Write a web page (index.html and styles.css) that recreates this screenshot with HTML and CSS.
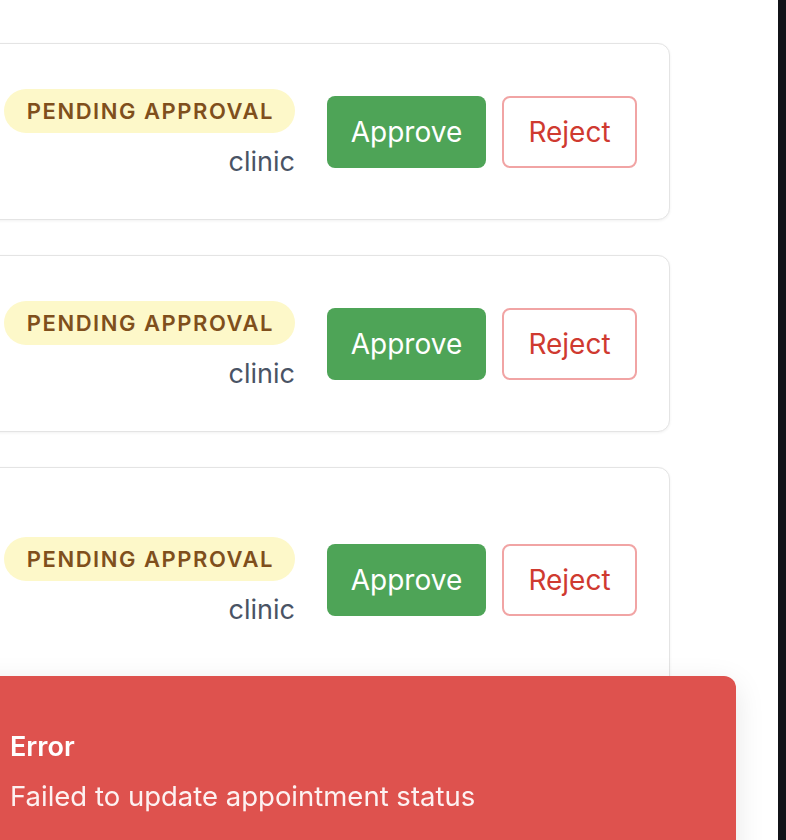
FILE: index.html
```html
<!DOCTYPE html>
<html lang="en">
<head>
<meta charset="utf-8">
<title>Pending appointments</title>
<link rel="stylesheet" href="styles.css">
</head>
<body>
<div class="app">
  <main class="main">
    <div class="list">
      <div class="card">
        <div class="side">
          <div class="meta">
            <span class="badge">PENDING APPROVAL</span>
            <span class="kind">clinic</span>
          </div>
          <button class="btn approve">Approve</button>
          <button class="btn reject">Reject</button>
        </div>
      </div>
      <div class="card">
        <div class="side">
          <div class="meta">
            <span class="badge">PENDING APPROVAL</span>
            <span class="kind">clinic</span>
          </div>
          <button class="btn approve">Approve</button>
          <button class="btn reject">Reject</button>
        </div>
      </div>
      <div class="card tall">
        <div class="side">
          <div class="meta">
            <span class="badge">PENDING APPROVAL</span>
            <span class="kind">clinic</span>
          </div>
          <button class="btn approve">Approve</button>
          <button class="btn reject">Reject</button>
        </div>
      </div>
    </div>
  </main>
  <div class="rail"></div>
</div>
<div class="toast" role="alert">
  <div class="toast-title">Error</div>
  <div class="toast-text">Failed to update appointment status</div>
</div>
</body>
</html>
```
FILE: styles.css
```css
html, body {
  margin: 0;
  padding: 0;
  background: #ffffff;
  font-family: Inter, "Noto Sans", "Liberation Sans", sans-serif;
}

.app {
  display: flex;
  min-height: 100vh;
}

.main {
  flex: 1;
  overflow: hidden;
  padding-top: 43px;
}

.list {
  margin-left: -420px;
  margin-right: 108px;
  display: flex;
  flex-direction: column;
  gap: 35px;
}

.card {
  box-sizing: border-box;
  min-height: 177px;
  display: flex;
  align-items: center;
  justify-content: flex-end;
  padding: 0 32px 0 24px;
  border: 1.5px solid #e4e4e4;
  border-radius: 12px;
  background: #fff;
  box-shadow: 0 1px 3px rgba(0, 0, 0, 0.06);
}

.card.tall {
  min-height: 226px;
}

.side {
  display: flex;
  align-items: center;
}

.meta {
  display: flex;
  flex-direction: column;
  align-items: flex-end;
  gap: 10px;
  padding-top: 6px;
  margin-right: 32px;
}

.badge {
  display: inline-flex;
  align-items: center;
  height: 44px;
  padding: 0 21px 0 23px;
  border-radius: 999px;
  background: #fdf8c9;
  color: #7f4f1c;
  font-size: 22px;
  font-weight: 600;
  letter-spacing: 0.07em;
}

.kind {
  font-size: 27px;
  line-height: 38px;
  color: #4a5365;
}

.btn {
  box-sizing: border-box;
  height: 72px;
  border-radius: 8px;
  font-family: inherit;
  font-size: 28px;
  font-weight: 400;
  cursor: pointer;
}

.approve {
  width: 159px;
  border: none;
  background: #4ea457;
  color: #fff;
  margin-right: 16px;
}

.reject {
  width: 135px;
  border: 2px solid #f1a4a4;
  background: #fff;
  color: #cf3a30;
}

.rail {
  width: 8px;
  flex: none;
  background: #111318;
}

.toast {
  position: fixed;
  top: 676px;
  left: -40px;
  right: 50px;
  height: 200px;
  box-sizing: border-box;
  padding: 53px 0 0 50px;
  background: #de524e;
  border-radius: 12px;
  color: #fff;
  box-shadow: 0 8px 30px rgba(0, 0, 0, 0.1);
}

.toast-title {
  font-size: 27px;
  line-height: 36px;
  font-weight: 600;
}

.toast-text {
  margin-top: 11px;
  font-size: 27.5px;
  line-height: 40px;
  color: rgba(255, 255, 255, 0.92);
}
```
